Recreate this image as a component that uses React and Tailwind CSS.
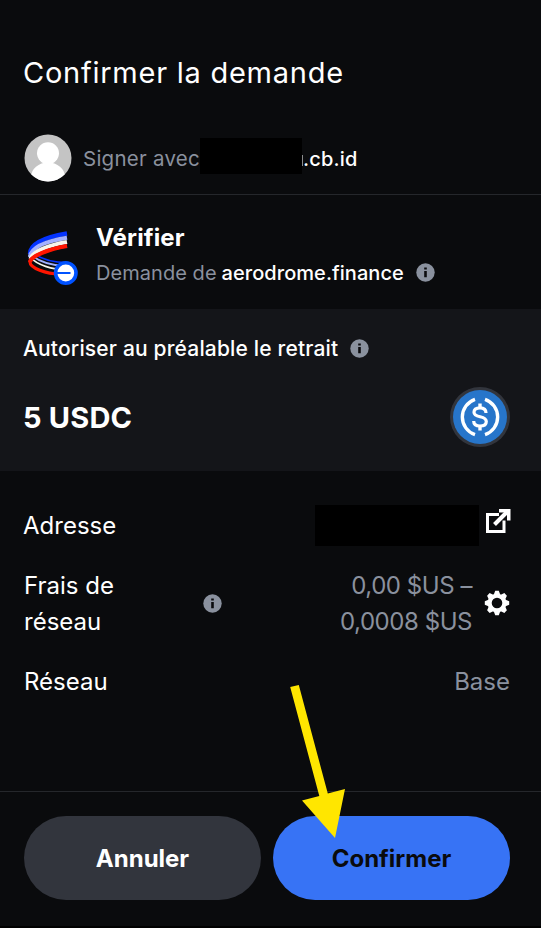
function InfoIcon({ className = '' }) {
    return (
        <svg viewBox="0 0 19 19" className={`w-[19px] h-[19px] shrink-0 ${className}`}>
            <circle cx="9.5" cy="9.5" r="9.2" fill="#8a919e" />
            <path d="M8.2 4.4h2.6v2H8.2zM8.2 8h2.6v6.2H8.2z" fill="#0a0b0d" />
        </svg>
    );
}

function Avatar() {
    return (
        <svg viewBox="0 0 48 48" className="w-12 h-12 shrink-0">
            <defs>
                <clipPath id="avatar">
                    <circle cx="24" cy="24" r="23.5" />
                </clipPath>
            </defs>
            <g clipPath="url(#avatar)">
                <rect width="48" height="48" fill="#c4c4c4" />
                <circle cx="24" cy="19.3" r="11" fill="#fff" />
                <ellipse cx="24" cy="43" rx="17" ry="14.5" fill="#fff" />
            </g>
        </svg>
    );
}

function AerodromeLogo() {
    return (
        <svg viewBox="0 0 60 60" className="w-15 h-15 -mt-px shrink-0 overflow-visible" fill="none">
            <path d="M9 34C17 40 28 43.500 43 43.500" stroke="#0433ff" strokeWidth="1.600" />
            <path d="M7 36C16 43 28 47 43 47" stroke="#9fb0ff" strokeWidth="1.800" />
            <path d="M6 38C13 46 28 50.500 43 51" stroke="#f6f4ea" strokeWidth="1.800" />
            <path d="M43 14.500C22 18 6 24 6 35" stroke="#0433ff" strokeWidth="4.400" />
            <path d="M43 18.800C23 22 7 28 6 38" stroke="#a3b0ff" strokeWidth="4.200" />
            <path d="M43 23C25 26 9 32 6.500 40" stroke="#f6f4ea" strokeWidth="4.200" />
            <path d="M43 27C25 30 6 37 6 43C6 49 22 55 36 55" stroke="#ff1500" strokeWidth="3.200" />
            <path d="M6 43C7 37 25 30 43 27" stroke="#ff1500" strokeWidth="4.200" />
            <circle cx="41.800" cy="54" r="10.200" fill="#fff" stroke="#0052ff" strokeWidth="3.600" />
            <path d="M32 54h14.500" stroke="#0052ff" strokeWidth="2" />
        </svg>
    );
}

function UsdcLogo() {
    return (
        <svg viewBox="0 0 60 60" className="w-15 h-15 shrink-0" fill="none">
            <circle cx="30" cy="30" r="30" fill="#32353d" />
            <circle cx="30" cy="30" r="27" fill="#2775ca" />
            <g stroke="#fff" strokeWidth="3.400">
                <path d="M25 12.300A18.700 18.700 0 0 0 25 47.700" />
                <path d="M35 12.300A18.700 18.700 0 0 1 35 47.700" />
                <path d="M36 26C36 22.500 33.500 20.800 30 20.800S24 22.400 24 25.200C24 31.500 36.300 28 36.300 34.400C36.300 37.500 33.500 39 30 39S23.700 37.500 23.700 34" strokeWidth="3.200" />
                <path d="M30 16.500v4.500M30 39v4.500" />
            </g>
        </svg>
    );
}

function ExternalIcon() {
    return (
        <svg viewBox="0 0 26 26" className="w-[26px] h-[26px] shrink-0" fill="none" stroke="#fff">
            <path d="M14 6.500H2.500V23.500H19V12.500" strokeWidth="3" />
            <path d="M9.500 16.500L22 4" strokeWidth="4" />
            <path d="M14 0.900H25.500V12.400H22V4.500H14Z" fill="#fff" stroke="none" />
        </svg>
    );
}

const TEETH = [0, 45, 90, 135, 180, 225, 270, 315];

function GearIcon() {
    return (
        <svg viewBox="0 0 26 26" className="w-[26px] h-[26px] shrink-0">
            {TEETH.map((a) => (
                <path key={a} d="M9.600 5L11.200 0.800H14.800L16.400 5Z" fill="#fff" transform={`rotate(${a} 13 13)`} />
            ))}
            <circle cx="13" cy="13" r="7.300" fill="none" stroke="#fff" strokeWidth="4" />
        </svg>
    );
}

function PointerArrow() {
    return (
        <svg viewBox="0 0 58 156" className="absolute left-[289px] top-[684px] w-[58px] h-[156px] pointer-events-none">
            <path d="M1.200 3L9.800 1L38.800 109.600L56 105L46 154L13 116.600L30.300 112Z" fill="#ffe600" />
        </svg>
    );
}

export default function App() {
    return (
        <div className="relative flex flex-col w-[541px] h-[928px] overflow-hidden bg-[#0a0b0d] border-b-2 border-black text-white font-['Inter',sans-serif]">
            <header className="h-[195px] shrink-0 border-b border-[#25272b] px-6 pt-[53px]">
                <h1 className="-ml-px text-[29px] leading-10 font-normal tracking-[0.75px] whitespace-nowrap">Confirmer la demande</h1>
                <div className="mt-[41px] flex items-center text-[20px] leading-7">
                    <Avatar />
                    <span className="ml-[11px] pt-0.5 w-[117px] text-[20.5px] text-[#8a919e] tracking-[0.25px] whitespace-nowrap">Signer avec</span>
                    <span className="w-[102px] h-9 -mt-1 bg-black" />
                    <span className="w-px h-[11px] mt-1 bg-[#8a8b8c]" />
                    <span className="pt-0.5 font-medium tracking-[0.2px] whitespace-nowrap">.cb.id</span>
                </div>
            </header>

            <section className="h-[114px] shrink-0 flex px-6 pt-[25px]">
                <AerodromeLogo />
                <div className="ml-3">
                    <h2 className="text-[24px] leading-9 font-bold tracking-[0.15px] whitespace-nowrap">Vérifier</h2>
                    <div className="flex items-center text-[20px] leading-[34px]">
                        <span className="text-[#8a919e] tracking-[0.05px] whitespace-nowrap">Demande de</span>
                        <span className="ml-[5px] font-medium tracking-[0.05px] whitespace-nowrap">aerodrome.finance</span>
                        <InfoIcon className="ml-3 -mt-px" />
                    </div>
                </div>
            </section>

            <section className="h-[162px] shrink-0 bg-[#141519] px-6 pt-[23px]">
                <div className="flex items-center text-[21px] leading-8 font-medium">
                    <span className="-ml-px pt-px tracking-[0.17px] whitespace-nowrap">Autoriser au préalable le retrait</span>
                    <InfoIcon className="ml-3" />
                </div>
                <div className="mt-[22px] mr-[7px] flex items-center justify-between">
                    <span className="-ml-px pt-0.5 text-[29px] leading-10 font-bold tracking-[0.2px]">5 USDC</span>
                    <UsdcLogo />
                </div>
            </section>

            <section className="flex-1 px-6 pt-[34px] text-[24px] leading-9">
                <div className="flex items-center h-[41px]">
                    <span className="flex-1 -ml-px">Adresse</span>
                    <span className="w-[164px] h-[41px] bg-black" />
                    <span className="ml-[6px] mr-[6px] -mt-2.5"><ExternalIcon /></span>
                </div>
                <div className="mt-[22px] flex items-center">
                    <span className="w-[179px]">Frais de<br />réseau</span>
                    <InfoIcon className="-mt-0.5" />
                    <span className="flex-1 text-right text-[#8a919e] tracking-[-0.45px] whitespace-nowrap">0,00 $US –<br />0,0008 $US</span>
                    <span className="ml-3 mr-[7px] -mt-0.5"><GearIcon /></span>
                </div>
                <div className="mt-6 mr-[7px] flex justify-between">
                    <span>Réseau</span>
                    <span className="text-[#8a919e]">Base</span>
                </div>
            </section>

            <footer className="h-[135px] shrink-0 border-t border-[#25272b] flex gap-3 px-6 pt-6">
                <button className="w-[237px] h-[84px] pt-0.5 rounded-full bg-[#32353d] text-[24px] font-bold">Annuler</button>
                <button className="w-[237px] h-[84px] pt-0.5 rounded-full bg-[#3773f5] text-[#0a0b0d] text-[24px] font-bold">Confirmer</button>
            </footer>

            <PointerArrow />
        </div>
    );
}
